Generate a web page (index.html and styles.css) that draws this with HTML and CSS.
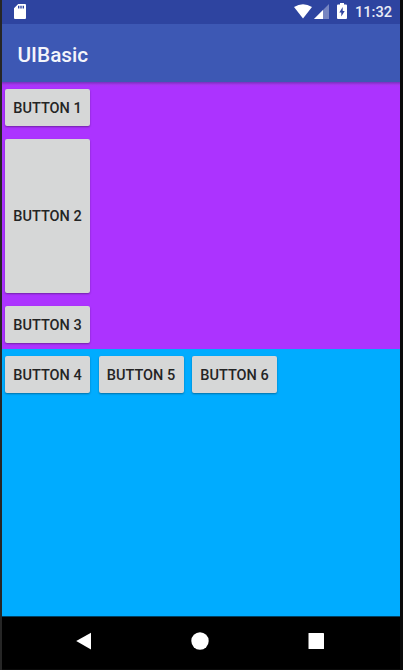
FILE: index.html
```html
<!DOCTYPE html>
<html lang="en">
<head>
<meta charset="utf-8">
<title>UIBasic</title>
<link rel="stylesheet" href="styles.css">
</head>
<body>
<main class="screen">
  <header class="status">
    <svg class="sd" width="12" height="15" viewBox="0 0 12 15"><path fill="#fff" fill-rule="evenodd" d="M4.2 0H11q1 0 1 1v13q0 1-1 1H1q-1 0-1-1V4.2zM4 1.8v2.7h1.4V1.8zm2.3 0v2.7h1.4V1.8zm2.3 0v2.7H10V1.8z"/></svg>
    <svg class="wifi" width="18" height="15" viewBox="0 0 18 15"><path fill="#fff" d="M0 3Q9-2.600 18 3L9 14.500z"/></svg>
    <svg class="signal" width="15" height="15" viewBox="0 0 15 15"><path fill="#fff" fill-opacity=".35" d="M15 0v15H0z"/><path fill="#fff" d="M9 6v9H0z"/></svg>
    <svg class="battery" width="10" height="16" viewBox="0 0 10 16"><path fill="#fff" d="M3 0h4v1.500h2q1 0 1 1V15q0 1-1 1H1q-1 0-1-1V2.500q0-1 1-1h2z"/><path fill="#3044a0" d="M5.700 4v4h2L4.300 13.500v-4h-2z"/></svg>
    <span class="clock">11:32</span>
  </header>
  <div class="appbar"><h1 class="title">UIBasic</h1></div>
  <section class="panel vertical">
    <button class="btn">BUTTON 1</button>
    <button class="btn tall">BUTTON 2</button>
    <button class="btn">BUTTON 3</button>
  </section>
  <section class="panel horizontal">
    <button class="btn">BUTTON 4</button>
    <button class="btn">BUTTON 5</button>
    <button class="btn">BUTTON 6</button>
  </section>
  <nav class="navbar">
    <svg width="18" height="18" viewBox="0 0 18 18"><path fill="#fff" d="M1.200 9 16 .700v16.700z"/></svg>
    <svg width="18" height="18" viewBox="0 0 18 18"><circle cx="9" cy="9" r="8.700" fill="#fff"/></svg>
    <svg width="18" height="18" viewBox="0 0 18 18"><rect x="1.500" y="1" width="15.500" height="16" rx=".6" fill="#fff"/></svg>
  </nav>
</main>
</body>
</html>
```
FILE: styles.css
```css
* { box-sizing: border-box; }

body {
  margin: 0;
  height: 670px;
  background: linear-gradient(to right, #262626 0 2px, #0b0b0b 2px);
  font-family: Roboto, "Liberation Sans", sans-serif;
  overflow: hidden;
}

.screen {
  width: 400px;
  height: 670px;
  padding-left: 1.5px;
  display: flex;
  flex-direction: column;
}

.status {
  height: 24px;
  flex: none;
  display: flex;
  align-items: flex-start;
  padding: 3px 9px 0 12px;
  background: #2e44a0;
  color: #e9ebf6;
}

.sd { margin-top: 1px; }
.wifi { margin: 1px 2px 0 auto; }
.signal { margin: 1px 8px 0 0; }
.battery { margin-right: 8px; }

.clock {
  width: 36px;
  font-size: 14.6px;
  font-weight: 500;
  line-height: 19px;
  white-space: nowrap;
}

.appbar {
  height: 58px;
  flex: none;
  display: flex;
  align-items: center;
  padding: 3px 16px 0;
  background: #3d58b4;
  color: #f4f5fb;
}

.title {
  margin: 0;
  font-size: 20.8px;
  font-weight: 500;
  line-height: 24px;
}

.panel {
  height: 267px;
  flex: none;
  display: flex;
  align-items: flex-start;
}

.vertical {
  flex-direction: column;
  gap: 13px;
  padding: 7px 0 0 3.5px;
  background: linear-gradient(#7831bd, #a936f4 3px, #ac33ff 5px);
}

.horizontal {
  gap: 8.5px;
  padding: 6.5px 0 0 3.5px;
  background: #00acff;
}

.btn {
  width: 85px;
  height: 37px;
  flex: none;
  padding: 2px 0 0;
  border: 0;
  border-radius: 2px;
  background: #d6d7d7;
  box-shadow: 0 1px 2px rgba(0, 0, 0, .35);
  color: #242424;
  font: 500 14.5px Roboto, "Liberation Sans", sans-serif;
  white-space: nowrap;
}

.tall { height: 153.5px; }

.navbar {
  height: 52.5px;
  flex: none;
  display: flex;
  align-items: center;
  justify-content: space-between;
  padding: 0 75.5px 4px 73px;
  background: #000;
  border-top: 1px solid #003f60;
}
```
